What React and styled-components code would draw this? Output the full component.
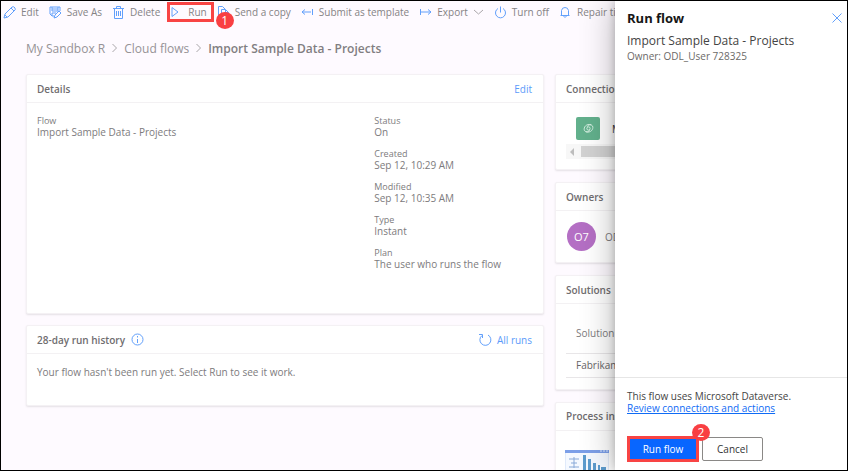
import React from "react";
import styled, { createGlobalStyle, css } from "styled-components";

const GlobalStyle = createGlobalStyle`
  *, *::before, *::after { box-sizing: border-box; }
  body { margin: 0; font-family: "Open Sans", "Noto Sans", sans-serif; font-size: 10px; color: #7d7b7d; background: #fefaff; }
  h1, h2, h3, p, dl, dd, ol { margin: 0; padding: 0; }
  button { font-family: inherit; cursor: pointer; }
`;

const Frame = styled.div`
  position: relative;
  height: 100vh;
  overflow: hidden;
  border: 1px solid #000;
  background: #fefaff;
`;

const Toolbar = styled.nav`
  display: flex;
  align-items: center;
  gap: 10px;
  height: 22px;
  padding-left: 2px;
  white-space: nowrap;
`;

const ToolButton = styled.button`
  position: relative;
  display: flex;
  flex: none;
  align-items: center;
  gap: 5px;
  padding: 0;
  border: 0;
  background: none;
  color: #858385;
  font-size: 10px;
  line-height: 14px;
`;

const marker = css`
  &::before {
    content: "";
    position: absolute;
    inset: -3px -7px -3px -3px;
    border: 3px solid #f84444;
  }
`;

const RunButton = styled(ToolButton)`
  z-index: 1;
  ${marker}
`;

const Step = styled.span`
  position: absolute;
  z-index: 2;
  top: ${(p) => p.$top}px;
  right: ${(p) => p.$right}px;
  width: 18px;
  height: 17px;
  border-radius: 50%;
  background: #f93f42;
  color: #fff;
  font-size: 12px;
  line-height: 17px;
  text-align: center;
`;

const Svg = styled.svg`
  flex: none;
  display: block;
  fill: none;
  stroke: ${(p) => p.$color || "#62a0fb"};
  stroke-width: 1;
`;

const Crumbs = styled.ol`
  display: flex;
  align-items: center;
  gap: 6px;
  padding: 16px 25px;
  list-style: none;
  font-size: 12px;
  line-height: 19px;
  white-space: nowrap;
`;

const CrumbLink = styled.a`
  color: #969396;
  text-decoration: none;
`;

const CrumbCurrent = styled.h1`
  color: #817e81;
  font-size: 12px;
  line-height: 19px;
  font-weight: 600;
`;

const Columns = styled.div`
  display: grid;
  grid-template-columns: 2fr 1fr;
  gap: 11px;
  padding: 0 33px 0 25px;
`;

const Column = styled.div`
  display: flex;
  flex-direction: column;
  gap: ${(p) => p.$gap}px;
  min-width: 0;
`;

const Card = styled.section`
  border: 1px solid #f4f1f4;
  border-radius: 2px;
  background: #fff;
  box-shadow: 0 1px 2px rgba(0, 0, 0, 0.1);
`;

const CardHeader = styled.header`
  display: flex;
  align-items: center;
  justify-content: space-between;
  height: 28px;
  padding: 0 11px 0 10px;
  border-bottom: 1px solid #f3f1f3;
`;

const CardTitle = styled.h2`
  display: flex;
  align-items: center;
  gap: 6px;
  color: #6f6d6f;
  font-size: 10px;
  line-height: 14px;
  font-weight: 600;
  white-space: nowrap;
`;

const CardLink = styled.a`
  display: flex;
  align-items: center;
  gap: 5px;
  color: #5b9bfa;
  font-size: 10px;
  text-decoration: none;
`;

const DetailsBody = styled.div`
  display: grid;
  grid-template-columns: 68fr 32fr;
  padding: 12px 10px 43px;
`;

const Facts = styled.dl`
  display: grid;
  align-content: start;
  gap: 10px;
`;

const Term = styled.dt`
  font-size: 9px;
  line-height: 11px;
`;

const Value = styled.dd`
  font-size: 10px;
  line-height: 12px;
`;

const HistoryBody = styled.p`
  padding: 11px 10px 26px;
  font-size: 10px;
  line-height: 14px;
`;

const ConnectionBody = styled.div`
  padding: 14px 10px 10px;
`;

const ConnectionRow = styled.div`
  display: flex;
  align-items: center;
  gap: 12px;
  padding-left: 10px;
  color: #333;
  white-space: nowrap;
`;

const ConnectionTile = styled.div`
  display: grid;
  place-items: center;
  width: 24px;
  height: 23px;
  border-radius: 2px;
  background: #62b08c;
`;

const ScrollTrack = styled.div`
  display: flex;
  align-items: center;
  gap: 6px;
  height: 15px;
  margin-top: 4px;
  padding-left: 4px;
  background: #f7f7f7;
`;

const ScrollThumb = styled.div`
  flex: 1;
  height: 11px;
  background: #d2d2d2;
`;

const OwnerRow = styled.div`
  display: flex;
  align-items: center;
  gap: 9px;
  padding: 11px;
`;

const Avatar = styled.div`
  display: grid;
  place-items: center;
  width: 29px;
  height: 29px;
  border-radius: 50%;
  background: #b46fc4;
  color: #fff;
  font-size: 11px;
`;

const SolutionTable = styled.table`
  width: calc(100% - 20px);
  margin: 10px 10px 11px;
  border-collapse: collapse;
  font-size: 10px;
  text-align: left;
  th, td { padding: 0 10px; border-bottom: 1px solid #e8e6e8; font-weight: 400; }
  th { height: 39px; }
  td { height: 24px; color: #676567; }
`;

const ProcessBody = styled.div`
  padding: 19px 9px 30px;
`;

const Panel = styled.aside`
  position: absolute;
  z-index: 1;
  top: 0;
  right: 0;
  bottom: 0;
  display: flex;
  flex-direction: column;
  width: 232px;
  background: #fff;
  box-shadow: 0 0 32px rgba(0, 0, 0, 0.3), 0 0 8px rgba(0, 0, 0, 0.2);
  color: #444;
  white-space: nowrap;
`;

const PanelHeader = styled.header`
  flex: 1;
  padding: 8px 4px 0 12px;
`;

const PanelTop = styled.div`
  display: flex;
  align-items: center;
  justify-content: space-between;
`;

const PanelTitle = styled.h2`
  color: #161616;
  font-size: 13px;
  line-height: 18px;
  font-weight: 700;
`;

const IconButton = styled.button`
  padding: 0;
  border: 0;
  background: none;
`;

const PanelSubtitle = styled.h3`
  margin-top: 6px;
  font-size: 12px;
  line-height: 16px;
  font-weight: 400;
`;

const OwnerLine = styled.p`
  color: #6b6967;
  font-size: 10px;
  line-height: 15px;
`;

const PanelFooter = styled.footer`
  padding: 12px 12px 8px;
  border-top: 1px solid #e6e6e6;
  font-size: 10px;
  line-height: 12px;
`;

const ReviewLink = styled.a`
  color: #0f6bf5;
`;

const Actions = styled.div`
  display: flex;
  align-items: center;
  gap: 3px;
  margin-top: 22px;
`;

const ActionButton = styled.button`
  position: relative;
  height: 24px;
  padding: 0;
  border: 1px solid #8a8886;
  border-radius: 2px;
  background: #fff;
  color: #333;
  width: 61px;
  font-size: 10px;
`;

const PrimaryButton = styled(ActionButton)`
  width: 72px;
  height: 26px;
  border: 3px solid #f84444;
  border-radius: 0;
  background: #0866ff;
  color: #fff;
`;

const paths = {
  edit: <><path d="M1 12l1-4 7-7q2-1 3 1t-1 3l-6 6z" /><path d="M8 2l3 3M2 9l2 2" /></>,
  save: <><path d="M5 10H3L1 8V1h10v4" /><path d="M3 1v4h6V1M3 10V7h4M5 12l1-3 4-4 2 2-4 4z" /><path d="M3 3h6" /></>,
  trash: <><path d="M1 2.5h11M4.5 2V.5h4V2M2.5 3v9.5h8V3M4.5 5v5M6.5 5v5M8.5 5v5" /></>,
  run: <path d="M2 1.5v9l6-4.5z" />,
  copy: <><path d="M4 9.5H1.5v-9h4L8 3" /><path d="M4.5 3.5h4l3 3v6h-7zM8.5 3.5v3h3" /></>,
  submit: <><path d="M1 6h9M4 3.5L1 6l3 2.5M11.5 3v6" /></>,
  exportFlow: <><path d="M2 6h10M9 3.5L12 6 9 8.5M1.5 3v6" /></>,
  power: <><path d="M4 2.5a5 5 0 1 0 5 0M6.5.5v6" /></>,
  bell: <><path d="M1.5 9.5h9M2.5 9.5v-5Q3 1.5 6 1.5t3.5 3v5M4.5 10q1.5 3 3 0" /></>,
  chevronDown: <path d="M1 4l4.5 4L10 4" />,
  chevronRight: <path d="M1.5 2l4 4-4 4" />,
  info: <><circle cx="6.5" cy="6.5" r="5.5" /><path d="M6.5 6v4M6.5 3v1.5" /></>,
  refresh: <><path d="M4 2.5a5.5 5.5 0 1 0 6-.5M1 1.5h3.5V5" /></>,
  close: <path d="M1.5 1.5l9 9M10.5 1.5l-9 9" />,
};

const Icon = ({ name, width = 13, height = 13, color }) => (
  <Svg $color={color} width={width} height={height} viewBox={`0 0 ${width} ${height}`} aria-hidden="true">
    {paths[name]}
  </Svg>
);

const Fact = ({ label, children }) => (
  <div>
    <Term>{label}</Term>
    <Value>{children}</Value>
  </div>
);

const DataverseMark = () => (
  <Svg $color="#e4f7ed" width="11" height="9" viewBox="0 0 13 11" aria-hidden="true">
    <path d="M10 1C4-1 0 4 1.5 8c3 3 6 1 6.5-1M3 9.5c6 2 10-3 8.500-7-3-3-6-1-6.500 1" />
    <circle cx="6.5" cy="5.5" r="2" />
  </Svg>
);

const ProcessThumbnail = () => (
  <Svg $color="none" width="44" height="32" viewBox="0 0 44 32" aria-hidden="true">
    <path d="M0 0h44v32H0z" fill="#f5f9ff" stroke="#ccdcf5" />
    <path d="M0 0h44v3H0z" fill="#7c9fe8" />
    <path d="M35 1h2M38 1h2M41 1h2" stroke="#dce9ff" />
    <path d="M4 9h10M6 13h6M4 17h10M9 7v11" stroke="#88a9d8" />
    <path d="M18 5h3v15h-3zM23 9h3v11h-3zM28 13h3v7h-3zM33 15h2v5h-2zM36 17h5v3h-5z" fill="#5c9bcd" />
  </Svg>
);

export default function App() {
  return (
    <>
      <GlobalStyle />
      <Frame>
        <main>
          <Toolbar aria-label="Flow commands">
            <ToolButton><Icon name="edit" />Edit</ToolButton>
            <ToolButton><Icon name="save" />Save As</ToolButton>
            <ToolButton><Icon name="trash" />Delete</ToolButton>
            <RunButton><Icon name="run" />Run<Step $top={7} $right={-27}>1</Step></RunButton>
            <ToolButton><Icon name="copy" />Send a copy</ToolButton>
            <ToolButton><Icon name="submit" />Submit as template</ToolButton>
            <ToolButton><Icon name="exportFlow" />Export<Icon name="chevronDown" width={11} color="#aaa7aa" /></ToolButton>
            <ToolButton><Icon name="power" />Turn off</ToolButton>
            <ToolButton><Icon name="bell" />Repair tips off</ToolButton>
          </Toolbar>
          <Crumbs>
            <li><CrumbLink href="#environment">My Sandbox R</CrumbLink></li>
            <Icon name="chevronRight" width={7} color="#aaa7aa" />
            <li><CrumbLink href="#flows">Cloud flows</CrumbLink></li>
            <Icon name="chevronRight" width={7} color="#aaa7aa" />
            <li><CrumbCurrent>Import Sample Data - Projects</CrumbCurrent></li>
          </Crumbs>
          <Columns>
            <Column $gap={11}>
              <Card>
                <CardHeader>
                  <CardTitle>Details</CardTitle>
                  <CardLink href="#edit">Edit</CardLink>
                </CardHeader>
                <DetailsBody>
                  <Facts><Fact label="Flow">Import Sample Data - Projects</Fact></Facts>
                  <Facts>
                    <Fact label="Status">On</Fact>
                    <Fact label="Created">Sep 12, 10:29 AM</Fact>
                    <Fact label="Modified">Sep 12, 10:35 AM</Fact>
                    <Fact label="Type">Instant</Fact>
                    <Fact label="Plan">The user who runs the flow</Fact>
                  </Facts>
                </DetailsBody>
              </Card>
              <Card>
                <CardHeader>
                  <CardTitle>28-day run history<Icon name="info" /></CardTitle>
                  <CardLink href="#runs"><Icon name="refresh" width={14} />All runs</CardLink>
                </CardHeader>
                <HistoryBody>Your flow hasn't been run yet. Select Run to see it work.</HistoryBody>
              </Card>
            </Column>
            <Column $gap={12}>
              <Card>
                <CardHeader><CardTitle>Connections</CardTitle></CardHeader>
                <ConnectionBody>
                  <ConnectionRow>
                    <ConnectionTile><DataverseMark /></ConnectionTile>
                    Microsoft Dataverse
                  </ConnectionRow>
                  <ScrollTrack>
                    <Svg $color="none" width="5" height="8" viewBox="0 0 5 8" aria-hidden="true"><path d="M4 0v8L0 4z" fill="#bdbdbd" /></Svg>
                    <ScrollThumb />
                  </ScrollTrack>
                </ConnectionBody>
              </Card>
              <Card>
                <CardHeader><CardTitle>Owners</CardTitle></CardHeader>
                <OwnerRow><Avatar>O7</Avatar>ODL_User 728325</OwnerRow>
              </Card>
              <Card>
                <CardHeader><CardTitle>Solutions</CardTitle></CardHeader>
                <SolutionTable>
                  <thead><tr><th scope="col">Solution</th></tr></thead>
                  <tbody><tr><td>Fabrikam</td></tr></tbody>
                </SolutionTable>
              </Card>
              <Card>
                <CardHeader><CardTitle>Process insights</CardTitle></CardHeader>
                <ProcessBody><ProcessThumbnail /></ProcessBody>
              </Card>
            </Column>
          </Columns>
        </main>
        <Panel role="dialog" aria-labelledby="run-flow-title">
          <PanelHeader>
            <PanelTop>
              <PanelTitle id="run-flow-title">Run flow</PanelTitle>
              <IconButton aria-label="Close"><Icon name="close" width={12} height={12} /></IconButton>
            </PanelTop>
            <PanelSubtitle>Import Sample Data - Projects</PanelSubtitle>
            <OwnerLine>Owner: ODL_User 728325</OwnerLine>
          </PanelHeader>
          <PanelFooter>
            <p>This flow uses Microsoft Dataverse.</p>
            <ReviewLink href="#connections">Review connections and actions</ReviewLink>
            <Actions>
              <PrimaryButton>Run flow<Step $top={-15} $right={-14}>2</Step></PrimaryButton>
              <ActionButton>Cancel</ActionButton>
            </Actions>
          </PanelFooter>
        </Panel>
      </Frame>
    </>
  );
}
